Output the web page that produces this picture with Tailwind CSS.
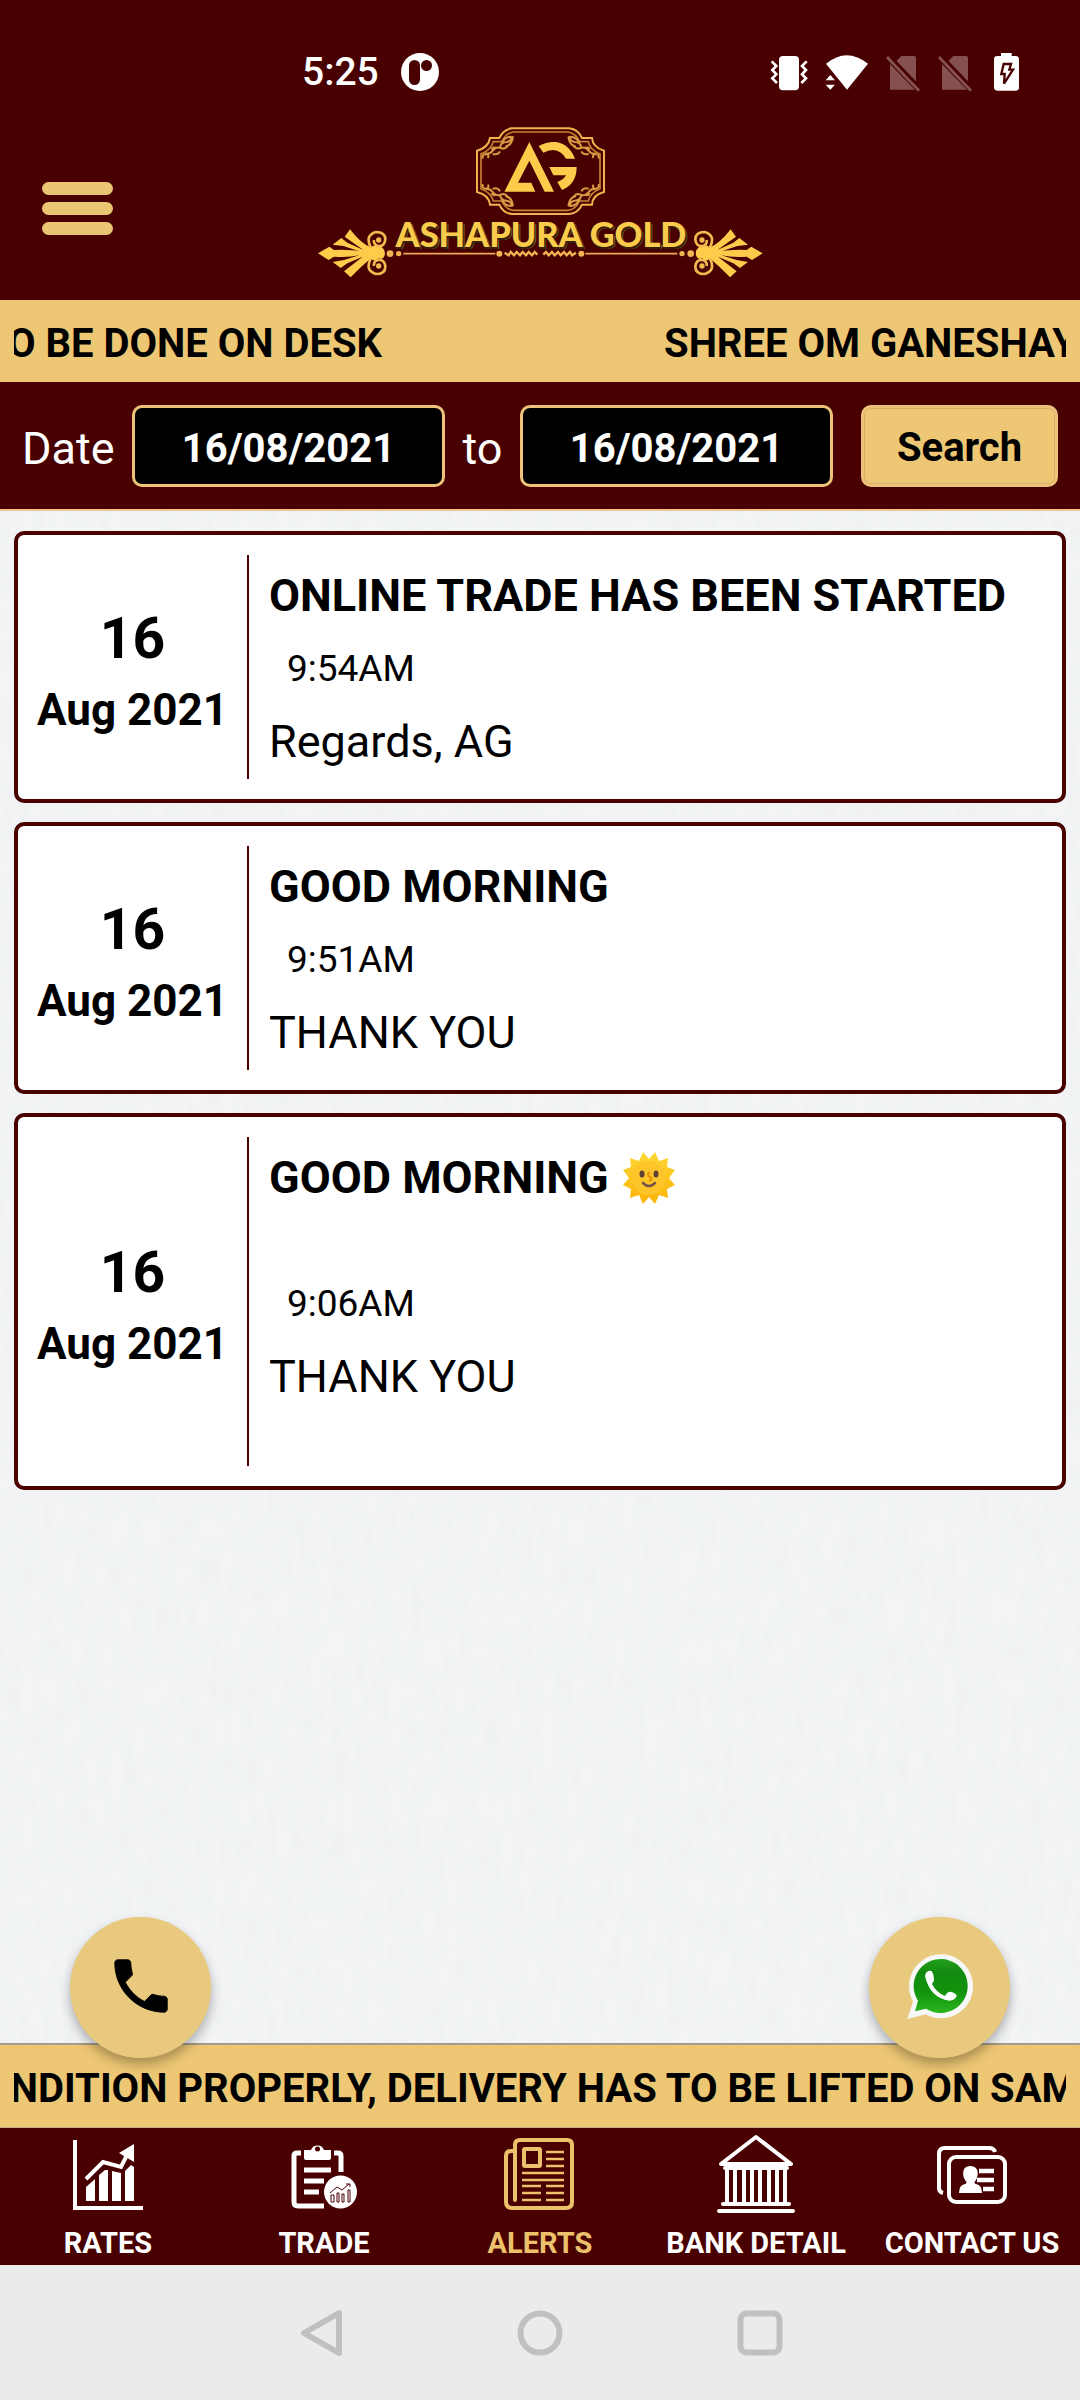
<!DOCTYPE html>
<html lang="en">
<head>
<meta charset="utf-8">
<meta name="viewport" content="width=device-width, initial-scale=1">
<title>Ashapura Gold – Alerts</title>
<script src="https://cdn.jsdelivr.net/npm/@tailwindcss/browser@4"></script>
</head>
<body class="flex min-h-screen flex-col bg-[#f2f4f5] font-[Roboto,sans-serif] text-black">

<header class="bg-[#480000]">
  <!-- Status bar -->
  <div class="flex h-[110px] items-center pt-[34px] pr-10 pl-[302px]">
    <span class="text-[39px] leading-none font-medium text-white">5:25</span>
    <svg class="ml-[22px] size-[38px]" viewBox="0 0 38 38" aria-hidden="true">
      <circle cx="19" cy="19" r="19" fill="#fff"/>
      <rect x="8" y="7" width="11" height="25" rx="5.500" fill="#480000"/>
      <circle cx="25.500" cy="12.500" r="5.500" fill="#480000"/>
    </svg>
    <svg class="ml-auto h-[70px] w-[300px]" viewBox="0 -9 900 210" aria-hidden="true">
      <rect x="117" y="48" width="60" height="103" rx="12" fill="#fff"/>
      <path d="M95 64l14 14-12 12 12 13-12 12 14 14M200 64l-14 14 12 12-12 13 12 12-14 14" fill="none" stroke="#fff" stroke-width="8"/>
      <path d="M258 71Q320 20 384 71L321 149z" fill="#fff"/>
      <path d="M271 105l14 16h-28zM271 149l14-15h-28z" fill="#fff"/>
      <g id="sim" fill="#845050">
        <path d="M450 72L525 149H450z"/>
        <path d="M484 48H522Q528 48 528 54V130L466 66z"/>
        <path d="M441 51L537 152" stroke="#845050" stroke-width="9"/>
        <path d="M452 50L534 136" stroke="#480000" stroke-width="8"/>
      </g>
      <use href="#sim" x="156"/>
      <path d="M783 39h32v9h12q10 0 10 10v84q0 10-10 10h-55q-10 0-10-10V58q0-10 10-10h11z" fill="#fff"/>
      <path d="M791 72h22l-5 17h11l-27 42 2-29h-10z" fill="none" stroke="#480000" stroke-width="7"/>
    </svg>
  </div>
  <!-- Brand bar -->
  <div class="grid h-[190px] grid-cols-[1fr_480px_1fr]">
    <button type="button" aria-label="Menu" class="mt-[72px] ml-[42px] flex w-[71px] flex-col gap-[7px] self-start">
      <span class="h-[13px] w-full rounded-full bg-[#eac672]"></span>
      <span class="h-[13px] w-full rounded-full bg-[#eac672]"></span>
      <span class="h-[13px] w-full rounded-full bg-[#eac672]"></span>
    </button>
    <svg class="h-[190px] w-[480px]" viewBox="0 0 1440 570" role="img" aria-label="Ashapura Gold">
      <defs>
        <g id="corner" fill="none" stroke="#d99a45" stroke-width="6">
          <path d="M548 146q-2-14 10-14 10 2 6 12M556 130q14 4 22-8 10-14 24-8 14 6 22-8M578 132q16 4 22-8M574 118q8-10 16-2M600 114q2-18 20-18 14-2 14-14 6-4 4 4-4 20-22 24M604 102q8-22 30-22"/>
        </g>
        <g id="wing">
          <path d="M54 430L88 410L102 420Q150 418 178 424L130 408L98 404L124 384L142 398L190 420L134 380L150 358Q182 400 212 412Q225 402 240 408Q258 418 254 436Q248 452 236 444Q230 458 212 446Q186 466 152 502L132 484Q162 460 188 440L142 460L122 474L98 456L132 450L178 436Q140 444 102 440L86 450z" fill="#fecb4b"/>
          <path d="M212 412q-18-36 16-46 28 0 28 22-2 22-22 20-14-4-12-18M212 446q-18 36 16 46 28 0 28-22-2-22-22-20-14 4-12 18" fill="none" stroke="#f3b84e" stroke-width="8"/>
          <circle cx="236" cy="390" r="8" fill="#f3b84e"/><circle cx="236" cy="468" r="8" fill="#f3b84e"/>
          <circle cx="270" cy="431" r="10" fill="#f3b553"/><circle cx="296" cy="431" r="8" fill="#f3b553"/>
          <path d="M310 431H586" stroke="#eda958" stroke-width="5"/>
          <circle cx="598" cy="431" r="9" fill="#f3b553"/>
          <path d="M614 428l12 8 6-10 10 10 8-10 10 10 8-10 10 10 8-10 10 10 8-10 8 8" fill="none" stroke="#f3b553" stroke-width="7"/>
        </g>
      </defs>
      <path d="M636 55H808Q834 58 846 84H876Q878 112 912 122V246Q878 254 876 284H846Q834 310 808 312H636Q610 310 598 284H570Q566 254 531 246V122Q566 112 570 84H598Q610 58 636 55z" fill="none" stroke="#f3b24e" stroke-width="6"/>
      <path d="M640 66H804Q828 70 838 95H865Q870 120 900 132V236Q870 248 865 273H838Q828 298 804 301H640Q616 298 606 273H580Q574 248 543 236V132Q574 120 580 95H606Q616 70 640 66z" fill="none" stroke="#c98135" stroke-width="5"/>
      <use href="#corner"/>
      <use href="#corner" transform="translate(1444 0) scale(-1 1)"/>
      <use href="#corner" transform="translate(0 368) scale(1 -1)"/>
      <use href="#corner" transform="translate(1444 368) scale(-1 -1)"/>
      <g fill="#fecb4b">
        <path d="M688 96L762 245H734L688 152L654 218H694L706 245H613z"/>
        <path d="M716 108Q742 94 768 96Q808 102 825 146H798Q784 122 760 120Q744 120 730 128z"/>
        <path d="M748 171H830Q830 222 786 240L772 216Q792 208 798 196H760z"/>
      </g>
      <use href="#wing"/>
      <use href="#wing" transform="translate(1442 0) scale(-1 1)"/>
      <g font-family="Lato, sans-serif" font-weight="900" font-size="103" text-anchor="middle">
        <text x="729" y="418" fill="#8a7a35" aria-hidden="true">ASHAPURA GOLD</text>
        <text x="727" y="416" fill="#33200a" aria-hidden="true">ASHAPURA GOLD</text>
        <text x="723" y="412" fill="#fbcb4c">ASHAPURA GOLD</text>
      </g>
    </svg>
  </div>
</header>

<!-- Top ticker -->
<div class="bg-[#edc774] px-[14px]">
  <div class="flex h-[82px] items-center overflow-hidden pt-[5px] text-[40px] font-bold whitespace-nowrap">
    <span class="flex w-[368px] shrink-0 justify-end">TO BE DONE ON DESK</span>
    <span class="ml-[282px]">SHREE OM GANESHAYA</span>
  </div>
</div>

<!-- Date filter -->
<form class="flex items-center border-b-2 border-[#f0c58f] bg-[#480000] px-[22px] pt-[23px] pb-[22px]" onsubmit="return false">
  <label for="from" class="w-[110px] shrink-0 pt-1 text-[45px] leading-none text-white">Date</label>
  <input id="from" type="text" value="16/08/2021" class="h-[82px] min-w-0 flex-1 rounded-[10px] border-[3px] border-[#edc27a] bg-black pt-1 text-center text-[40px] font-bold text-white">
  <label for="to" class="w-[75px] shrink-0 pt-1 text-center text-[45px] leading-none text-white">to</label>
  <input id="to" type="text" value="16/08/2021" class="h-[82px] min-w-0 flex-1 rounded-[10px] border-[3px] border-[#edc27a] bg-black pt-1 text-center text-[40px] font-bold text-white">
  <button type="submit" class="ml-7 h-[82px] w-[197px] shrink-0 rounded-[10px] border-[3px] border-[#edc27a] bg-[#edc774] pt-1 text-[40px] font-bold inset-ring inset-ring-[#d9b063]">Search</button>
</form>

<main class="relative flex-1 px-[14px] pt-5 pb-[160px]">
  <!-- Paper grain -->
  <svg class="absolute inset-0 h-full w-full" aria-hidden="true">
    <filter id="grain" x="0" y="0" width="100%" height="100%">
      <feTurbulence type="fractalNoise" baseFrequency="0.09 0.025" numOctaves="3" seed="4"/>
      <feColorMatrix values="0 0 0 0 0.55  0 0 0 0 0.58  0 0 0 0 0.6  0.5 0 0 0 -0.18"/>
    </filter>
    <rect width="100%" height="100%" filter="url(#grain)" opacity=".3"/>
  </svg>

  <div class="relative flex flex-col gap-[19px]">
    <article class="flex rounded-[10px] border-4 border-[#480000] bg-white py-5">
      <div class="flex w-[229px] shrink-0 flex-col items-center justify-center gap-3 pt-[7px] font-bold">
        <span class="text-[57px] leading-[66px]">16</span>
        <span class="text-[44px] leading-[52px]">Aug 2021</span>
      </div>
      <div class="flex flex-1 flex-col gap-[25px] border-l-2 border-[#480000] pt-[15px] pb-[11px] pl-5">
        <h2 class="text-[45px] leading-[52px] font-bold">ONLINE TRADE HAS BEEN STARTED</h2>
        <time class="pl-[18px] text-[37px] leading-[44px]">9:54AM</time>
        <p class="text-[45px] leading-[52px]">Regards, AG</p>
      </div>
    </article>

    <article class="flex rounded-[10px] border-4 border-[#480000] bg-white py-5">
      <div class="flex w-[229px] shrink-0 flex-col items-center justify-center gap-3 pt-[7px] font-bold">
        <span class="text-[57px] leading-[66px]">16</span>
        <span class="text-[44px] leading-[52px]">Aug 2021</span>
      </div>
      <div class="flex flex-1 flex-col gap-[25px] border-l-2 border-[#480000] pt-[15px] pb-[11px] pl-5">
        <h2 class="text-[45px] leading-[52px] font-bold">GOOD MORNING</h2>
        <time class="pl-[18px] text-[37px] leading-[44px]">9:51AM</time>
        <p class="text-[45px] leading-[52px]">THANK YOU</p>
      </div>
    </article>

    <article class="flex rounded-[10px] border-4 border-[#480000] bg-white py-5">
      <div class="flex w-[229px] shrink-0 flex-col items-center justify-center gap-3 pt-[7px] font-bold">
        <span class="text-[57px] leading-[66px]">16</span>
        <span class="text-[44px] leading-[52px]">Aug 2021</span>
      </div>
      <div class="flex flex-1 flex-col gap-[25px] border-l-2 border-[#480000] pt-[15px] pb-[11px] pl-5">
        <h2 class="flex h-[105px] items-start gap-[14px] text-[45px] leading-[52px] font-bold">GOOD MORNING
          <svg class="size-[52px]" viewBox="0 0 52 52" role="img" aria-label="Sun with face">
            <defs><linearGradient id="sun" x1="0" y1="0" x2="0" y2="1"><stop offset="0" stop-color="#fdd835"/><stop offset="1" stop-color="#fcb207"/></linearGradient></defs>
            <path d="M20 0L26 7L32 0L36 9L45 6L44 15L52 18L46 26L52 33L44 37L45 46L36 43L32 52L26 45L20 52L16 43L7 46L8 37L0 33L6 26L0 18L8 15L7 6L16 9z" fill="url(#sun)"/>
            <circle cx="26" cy="26" r="17" fill="#fdc52a"/>
            <ellipse cx="19" cy="22" rx="2.500" ry="3.500" fill="#5d4037"/><ellipse cx="33" cy="22" rx="2.500" ry="3.500" fill="#5d4037"/>
            <path d="M27 20q-4 3 0 5t-1 4" fill="none" stroke="#e58f00" stroke-width="2"/>
            <path d="M20 31q6 6 12 0" fill="none" stroke="#795548" stroke-width="2.500" stroke-linecap="round"/>
          </svg>
        </h2>
        <time class="pl-[18px] text-[37px] leading-[44px]">9:06AM</time>
        <p class="h-[104px] text-[45px] leading-[52px]">THANK YOU</p>
      </div>
    </article>
  </div>

  <a href="tel:" aria-label="Call" class="absolute -bottom-[15px] left-[70px] z-10 flex size-[141px] items-center justify-center rounded-full bg-[#e8c97d] pb-1 shadow-[0_6px_12px_rgba(0,0,0,0.3)]">
    <svg class="size-[70px]" viewBox="0 0 24 24" aria-hidden="true"><path d="M20 15.500c-1.200 0-2.500-.2-3.600-.6-.3-.1-.7 0-1 .2l-2.200 2.200c-2.800-1.400-5.100-3.800-6.600-6.600l2.200-2.200c.3-.3.400-.7.200-1C8.700 6.500 8.500 5.200 8.500 4c0-.5-.5-1-1-1H4c-.5 0-1 .5-1 1 0 9.400 7.600 17 17 17 .5 0 1-.5 1-1v-3.500c0-.5-.5-1-1-1z" stroke="#000" stroke-width=".3"/></svg>
  </a>
  <a href="https://wa.me/" aria-label="WhatsApp" class="absolute right-[70px] -bottom-[15px] z-10 flex size-[141px] items-center justify-center rounded-full bg-[#e8c97d] pb-1 shadow-[0_6px_12px_rgba(0,0,0,0.3)]">
    <svg class="size-[66px]" viewBox="380 193 198 198" aria-hidden="true">
      <defs><linearGradient id="wa" x1="0" y1="0" x2="0" y2="1"><stop offset="0" stop-color="#24a01c"/><stop offset=".25" stop-color="#138a10"/><stop offset=".6" stop-color="#12920d"/><stop offset="1" stop-color="#2bb51f"/></linearGradient></defs>
      <path d="M381 391L398 339A96 96 0 1 1 436 377z" fill="#f7f7f7"/>
      <path d="M404 368L413 336A81 81 0 1 1 437 360z" fill="url(#wa)"/>
      <path d="M434 262q2-16 17-16 8 2 10 26 2 6-6 14 12 24 38 36 10-14 16-13 20 4 20 13-6 14-22 14-58-8-73-74z" fill="#fff"/>
    </svg>
  </a>
</main>

<!-- Bottom ticker -->
<div class="border-t-2 border-b border-t-[#a39b8b] border-b-[#c9ad84] bg-[#edc774] px-[14px]">
  <div class="flex h-[82px] items-center overflow-hidden pt-[5px] text-[40px] font-bold whitespace-nowrap">
    <span class="-ml-[58px]">CONDITION PROPERLY, DELIVERY HAS TO BE LIFTED ON SAME</span>
  </div>
</div>

<nav class="grid h-[137px] grid-cols-5 bg-[#480000] text-center text-[29px] leading-8 font-bold whitespace-nowrap text-white">
  <a href="#rates" class="flex flex-col items-center gap-[13px] pt-[6px]">
    <svg class="size-20" viewBox="-5 -6 80 80" fill="#fff" aria-hidden="true">
      <path d="M0 0h4v66h66v4H0zM13 47l9-8v22h-9zM26 35l6-5h3v31h-9zM39 31l9 2v28h-9zM52 31l6-6 3 2v34h-9z"/>
      <path d="M13 39L30 22L48 27L55 13" fill="none" stroke="#fff" stroke-width="4"/>
      <path d="M46 13L61 4V22z"/>
    </svg>RATES
  </a>
  <a href="#trade" class="flex flex-col items-center gap-[13px] pt-[6px]">
    <svg class="size-20" viewBox="-8 -8 80 80" fill="none" stroke="#fff" aria-hidden="true">
      <path d="M9 11H5q-3 0-3 3V60q0 4 4 4H32M42 11H46q3 0 3 3V30" stroke-width="5"/>
      <path d="M12 8h7a7 7 0 0 1 13 0h7v8q0 2-2 2H14q-2 0-2-2z" fill="#fff" stroke="none"/>
      <circle cx="25.500" cy="7" r="2.500" fill="#480000" stroke="none"/>
      <path d="M12 28H39M12 39H32M12 50H27" stroke-width="5"/>
      <circle cx="48.500" cy="50" r="16.500" fill="#fff" stroke="none"/>
      <path d="M38 51L45 45L50 48L57 42M54 42h4v3M39 53h3v7h-3zM45 51h2v9h-2zM50 52h2v8h-2zM56 48h2v12h-2z" stroke="#480000" stroke-width="1"/>
    </svg>TRADE
  </a>
  <a href="#alerts" aria-current="page" class="flex flex-col items-center gap-[13px] pt-[6px] text-[#edc06c]">
    <svg class="size-20" viewBox="-4 -4 80 80" fill="none" stroke="#edc06c" aria-hidden="true">
      <path d="M11 62V7q0-5 5-5H63q5 0 5 5V64q0 6-6 6H8q-6 0-6-6V18q0-5 5-5h3" stroke-width="4" stroke-linecap="round"/>
      <rect x="20" y="11" width="16" height="17" rx="1" stroke-width="4"/>
      <path d="M42 14H60M42 21H60M42 28H60M18 35H60M18 42H60M18 48H37M42 48H60M18 55H37M42 55H60M18 62H37M42 62H60" stroke-width="2.500"/>
    </svg>ALERTS
  </a>
  <a href="#bank" class="flex flex-col items-center gap-[13px] pt-[6px]">
    <svg class="size-20" viewBox="-1 -1 80 80" fill="none" stroke="#fff" stroke-linecap="round" stroke-linejoin="round" aria-hidden="true">
      <path d="M4 29L39 2L74 29z" stroke-width="4"/>
      <path d="M6 69H72M2 76H76M8 33H70" stroke-width="4"/>
      <path d="M10 33V69M18 33V69M27 33V69M35 33V69M43 33V69M52 33V69M60 33V69M68 33V69" stroke-width="4"/>
    </svg>BANK DETAIL
  </a>
  <a href="#contact" class="flex flex-col items-center gap-[13px] pt-[6px]">
    <svg class="size-20" viewBox="-5 -12 80 80" fill="none" stroke="#fff" aria-hidden="true">
      <path d="M58 6Q57 2 52 2H8Q2 2 2 8V42Q2 46 6 47" stroke-width="4"/>
      <rect x="12" y="11" width="56" height="45" rx="7" stroke-width="4"/>
      <path d="M42 25H57M40 34H57M46 43H57" stroke-width="4.500"/>
      <path d="M33 20c9 0 9 9 6 14q-3 3 0 4 6 1 6 9H22q0-8 6-9 3-1 0-4c-3-5-3-14 5-14z" fill="#fff" stroke="none"/>
    </svg>CONTACT US
  </a>
</nav>

<!-- System navigation -->
<div class="grid h-[135px] grid-cols-[1fr_220px_1fr] items-center bg-[#ebebeb]">
  <button type="button" aria-label="Back" class="mr-[85px] justify-self-end">
    <svg class="size-[46px]" viewBox="0 0 46 46" fill="none" stroke="#c0c0c0" stroke-width="6" stroke-linejoin="round" aria-hidden="true"><path d="M5 23L40 3V43z"/></svg>
  </button>
  <button type="button" aria-label="Home" class="justify-self-center">
    <svg class="size-[46px]" viewBox="0 0 46 46" fill="none" stroke="#c0c0c0" stroke-width="6" aria-hidden="true"><circle cx="23" cy="23" r="19.500"/></svg>
  </button>
  <button type="button" aria-label="Recent apps" class="ml-[87px] justify-self-start">
    <svg class="size-[46px]" viewBox="0 0 46 46" fill="none" stroke="#c0c0c0" stroke-width="6" aria-hidden="true"><rect x="3.500" y="3.500" width="39" height="39" rx="6"/></svg>
  </button>
</div>
</body>
</html>
